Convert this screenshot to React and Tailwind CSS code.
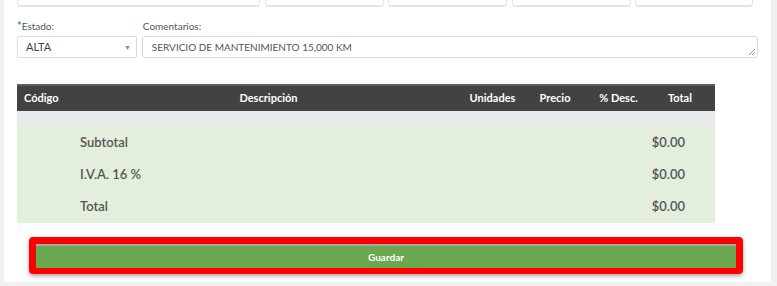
import React from "react";

export default function App() {
  const rows = [
    { label: "Subtotal", value: "$0.00", h: "h-[33px]" },
    { label: "I.V.A. 16 %", value: "$0.00", h: "h-[32px]" },
    { label: "Total", value: "$0.00", h: "h-[32px]" },
  ];

  return (
    <div className="w-[777px] h-[286px] bg-[#f1f1f1] pl-[4px] pr-[6px] overflow-hidden font-['Lato',sans-serif]">
      <div className="bg-white h-[282px] px-[13px] relative">
        {/* Campos de arriba (cortados) */}
        <div className="flex h-[7px] overflow-hidden gap-[4px]">
          <div className="w-[243px] h-[7px] border-x border-b-2 border-[#e3e6e9] rounded-b-[4px]" />
          <div className="w-[119px] h-[7px] ml-[1px] border-x border-b-2 border-[#e3e6e9] rounded-b-[4px]" />
          <div className="w-[119px] h-[7px] border-x border-b-2 border-[#e3e6e9] rounded-b-[4px]" />
          <div className="w-[119px] h-[7px] ml-[1px] border-x border-b-2 border-[#e3e6e9] rounded-b-[4px]" />
          <div className="w-[118px] h-[7px] border-x border-b-2 border-[#e3e6e9] rounded-b-[4px]" />
        </div>

        {/* Estado y comentarios */}
        <div className="flex mt-[12px] gap-[5px]">
          <div className="w-[120px]">
            <div className="text-[10px] text-[#555] h-[17px] leading-[14px]">
              <span className="text-[#3cb043] font-bold text-[11px]">*</span>Estado:
            </div>
            <div className="h-[22px] border border-[#dcdcdc] rounded-[2px] flex items-center justify-between pl-[8px] pr-[5px]">
              <span className="text-[11px] text-[#444]">ALTA</span>
              <span className="text-[7px] text-[#888]">▼</span>
            </div>
          </div>
          <div className="w-[617px]">
            <div className="text-[10px] text-[#555] h-[17px] leading-[14px] pl-[1px]">Comentarios:</div>
            <div className="h-[22px] border border-[#dcdcdc] rounded-[3px] flex items-center pl-[9px] relative">
              <span className="text-[10px] text-[#555]">SERVICIO DE MANTENIMIENTO 15,000 KM</span>
              <svg className="absolute right-[1px] bottom-[1px]" width="8" height="8" viewBox="0 0 8 8">
                <path d="M7 1 L1 7 M7 4 L4 7" stroke="#999" strokeWidth="1" />
              </svg>
            </div>
          </div>
        </div>

        {/* Tabla */}
        <div className="w-[698px] mt-[26px]">
          <div className="flex h-[27px] items-center bg-[#424242] border-t-2 border-[#5e5e5e] text-white text-[11px] font-bold">
            <div className="w-[60px] pl-[7px]">Código</div>
            <div className="w-[383px] text-center">Descripción</div>
            <div className="w-[65px] text-center">Unidades</div>
            <div className="w-[60px] text-center">Precio</div>
            <div className="w-[67px] text-center">% Desc.</div>
            <div className="w-[56px] text-center">Total</div>
          </div>
          <div className="h-[15px] bg-[#e8ebee]" />
          <div className="bg-[#e3efdc]">
            {rows.map((r) => (
              <div key={r.label} className={`flex items-center justify-between ${r.h} pl-[63px] pr-[30px] text-[13px] font-semibold text-[#555]`}>
                <span>{r.label}</span>
                <span>{r.value}</span>
              </div>
            ))}
          </div>
        </div>

        {/* Botón guardar */}
        <div className="ml-[12px] mt-[14px] w-[714px] h-[37px] border-[7px] border-b-[6px] border-[#ff0000] rounded-[4px] shadow-[0_2px_4px_rgba(0,0,0,0.35)]">
          <button className="w-full h-full bg-[#6aa84f] border-t-2 border-[#a9a9a9] text-white text-[10px] font-bold flex items-center justify-center">
            Guardar
          </button>
        </div>
      </div>
    </div>
  );
}
